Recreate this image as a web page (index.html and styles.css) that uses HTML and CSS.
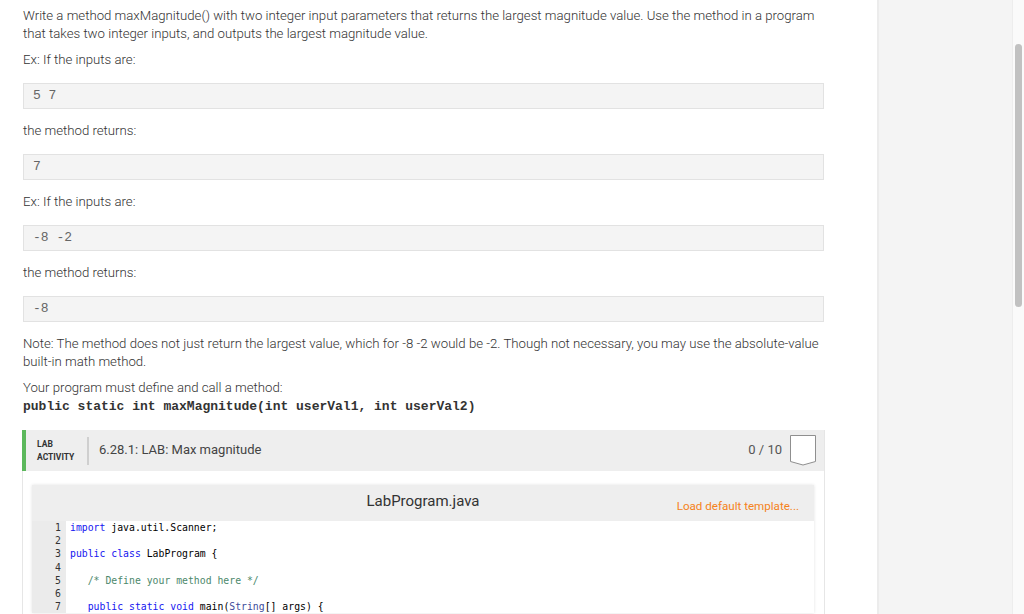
FILE: index.html
```html
<!DOCTYPE html>
<html>
<head>
<meta charset="utf-8">
<link rel="stylesheet" href="styles.css">
</head>
<body>
<div class="page">
  <main class="content">
    <p>Write a method maxMagnitude() with two integer input parameters that returns the largest magnitude value. Use the method in a program that takes two integer inputs, and outputs the largest magnitude value.</p>
    <p>Ex: If the inputs are:</p>
    <pre class="sample">5 7</pre>
    <p>the method returns:</p>
    <pre class="sample">7</pre>
    <p>Ex: If the inputs are:</p>
    <pre class="sample">-8 -2</pre>
    <p>the method returns:</p>
    <pre class="sample">-8</pre>
    <p>Note: The method does not just return the largest value, which for -8 -2 would be -2. Though not necessary, you may use the absolute-value built-in math method.</p>
    <p>Your program must define and call a method:<br><code class="sig">public static int maxMagnitude(int userVal1, int userVal2)</code></p>

    <section class="lab">
      <header class="lab-header">
        <div class="lab-label">LAB<br>ACTIVITY</div>
        <div class="lab-divider"></div>
        <div class="lab-title">6.28.1: LAB: Max magnitude</div>
        <div class="lab-score">0 / 10</div>
        <svg class="badge" width="28" height="31" viewBox="0 0 28 31">
          <path d="M1.5 0.5 H26.5 V26.5 L14 30 L1.5 26.5 Z" fill="#fff" stroke="#8f8f8f" stroke-width="1"/>
        </svg>
      </header>
      <div class="editor">
        <div class="editor-head">
          <span class="file-name">LabProgram.java</span>
          <span class="load-link">Load default template...</span>
        </div>
        <div class="code">
          <div class="gutter"><div>1</div><div>2</div><div>3</div><div>4</div><div>5</div><div>6</div><div>7</div></div>
          <div class="lines">
            <div class="ln"><span class="kw">import</span> java.util.Scanner;</div>
            <div class="ln"> </div>
            <div class="ln"><span class="kw">public</span> <span class="kw">class</span> LabProgram {</div>
            <div class="ln"> </div>
            <div class="ln">   <span class="cm">/* Define your method here */</span></div>
            <div class="ln"> </div>
            <div class="ln">   <span class="kw">public</span> <span class="kw">static</span> <span class="kw">void</span> main(<span class="ty">String</span>[] args) {</div>
          </div>
        </div>
      </div>
    </section>
  </main>
  <aside class="side"></aside>
  <div class="scrollbar"><div class="thumb"></div></div>
</div>
</body>
</html>
```
FILE: styles.css
```css
html, body {
  margin: 0;
  padding: 0;
  height: 614px;
  overflow: hidden;
  background: #fff;
}

.page {
  display: flex;
  width: 1024px;
  height: 614px;
}

.content {
  width: 801px;
  padding: 7px 53px 0 23px;
  font-family: Roboto, "Liberation Sans", sans-serif;
  font-weight: 300;
  font-size: 13.2px;
  line-height: 18px;
  color: #333;
  flex: none;
}

.content p {
  margin: 0 0 8px;
}

.sample {
  margin: 14px 0 13px;
  height: 24px;
  box-sizing: content-box;
  background: #f4f4f4;
  border: 1px solid #e2e2e2;
  font-family: "Liberation Mono", monospace;
  font-size: 13px;
  line-height: 24px;
  padding: 0 9px;
  color: #666;
}

.sig {
  font-family: "Liberation Mono", monospace;
  font-weight: 700;
  font-size: 13px;
  color: #333;
}

.lab {
  width: 801px;
  margin-top: 14px;
  border-right: 1px solid #e6e6e6;
  border-left: 1px solid #e6e6e6;
  margin-left: -1px;
  padding-bottom: 20px;
}

.lab-header {
  display: flex;
  align-items: center;
  height: 41px;
  margin-left: -1px;
  background: #eeeeee;
  border-left: 4px solid #5cb85c;
  padding: 0 7px 0 11px;
}

.lab-label {
  font-family: Roboto, "Liberation Sans", sans-serif;
  font-weight: 700;
  font-size: 8.5px;
  line-height: 13px;
  color: #333;
  width: 50px;
  flex: none;
}

.lab-divider {
  width: 2px;
  height: 28px;
  background: #cfcfcf;
  margin: 0 10px 0 0;
  flex: none;
}

.lab-title {
  flex: 1;
  font-weight: 400;
  font-size: 13px;
  color: #444;
  margin-top: -2px;
}

.lab-score {
  font-weight: 400;
  font-size: 13px;
  color: #555;
  margin-right: 7px;
  margin-top: -2px;
}

.badge {
  display: block;
  flex: none;
}

.editor {
  margin: 14px 10px 0 9px;
  box-shadow: 0 0 3px rgba(0,0,0,0.12);
}

.editor-head {
  display: flex;
  align-items: center;
  justify-content: center;
  position: relative;
  height: 36px;
  background: #eeeeee;
}

.file-name {
  font-weight: 400;
  font-size: 15px;
  color: #333;
  margin-top: -4px;
}

.load-link {
  position: absolute;
  right: 15px;
  top: 12px;
  font-weight: 400;
  font-size: 11.6px;
  color: #f58220;
}

.code {
  display: flex;
  background: #fff;
  font-family: "DejaVu Sans Mono", monospace;
  font-size: 9.8px;
  line-height: 13.2px;
  color: #000;
}

.gutter {
  width: 29px;
  padding-right: 5px;
  text-align: right;
  background: #ebebeb;
  color: #333;
  flex: none;
}

.lines {
  padding-left: 4px;
}

.ln {
  white-space: pre;
  height: 13.2px;
}

.kw { color: #1515f0; }
.cm { color: #4c886b; }
.ty { color: #3c4c9a; }

.side {
  width: 133px;
  flex: none;
  background: #f4f4f4;
  border-left: 2px solid #ececec;
  border-right: 1px solid #ededed;
}

.scrollbar {
  flex: 1;
  background: #fafafa;
  position: relative;
}

.thumb {
  position: absolute;
  left: 2px;
  top: 44px;
  width: 7px;
  height: 263px;
  border-radius: 4px;
  background: #c1c1c1;
}
```
